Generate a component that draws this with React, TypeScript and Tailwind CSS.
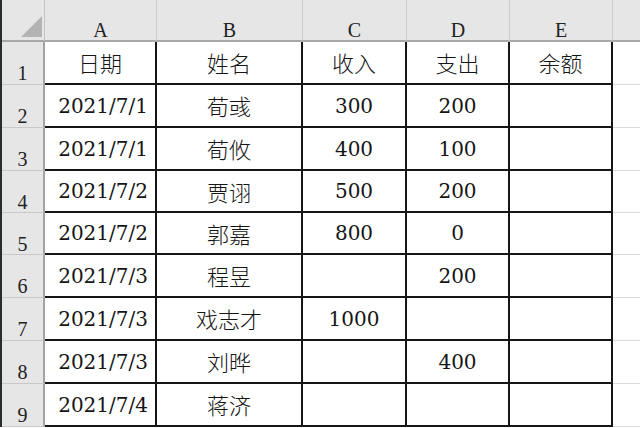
import React from "react";

const rows: { n: string; h: string; a: string; b: string; c: string; d: string }[] = [
  { n: "2", h: "h-[43px]", a: "2021/7/1", b: "荀彧", c: "300", d: "200" },
  { n: "3", h: "h-[43px]", a: "2021/7/1", b: "荀攸", c: "400", d: "100" },
  { n: "4", h: "h-[42px]", a: "2021/7/2", b: "贾诩", c: "500", d: "200" },
  { n: "5", h: "h-[42px]", a: "2021/7/2", b: "郭嘉", c: "800", d: "0" },
  { n: "6", h: "h-[43px]", a: "2021/7/3", b: "程昱", c: "", d: "200" },
  { n: "7", h: "h-[43px]", a: "2021/7/3", b: "戏志才", c: "1000", d: "" },
  { n: "8", h: "h-[43px]", a: "2021/7/3", b: "刘晔", c: "", d: "400" },
  { n: "9", h: "h-[43px]", a: "2021/7/4", b: "蒋济", c: "", d: "" },
];

const serif = "font-['DejaVu_Serif',serif] text-[20px] text-[#151515]";
const cjk = "font-['Noto_Sans_CJK_SC',sans-serif] font-light text-[22px] text-[#151515]";
const hdr = "font-['Liberation_Serif',serif] text-[20px] text-[#222]";
const cell = "border-r-2 border-b-2 border-[#161616] flex items-center justify-center";

function RowHead({ n }: { n: string }) {
  return (
    <div className={`w-[43px] shrink-0 bg-[#e6e6e6] border-r-2 border-r-[#a3a3a3] border-b border-b-[#c9c9c9] flex justify-center items-center pt-[20px] leading-none ${hdr}`}>
      {n}
    </div>
  );
}

export default function App() {
  return (
    <div className="w-[640px] h-[428px] overflow-hidden bg-white flex flex-col">
      {/* column header */}
      <div className="flex h-[42px] shrink-0">
        <div className="w-[2px] bg-[#26302b]" />
        <div className="w-[43px] shrink-0 bg-[#e6e6e6] border-r border-r-[#c4c4c4] border-b-2 border-b-[#a8a8a8] flex items-end justify-end pr-[2px] pb-[3px]">
          <svg width="21" height="21" viewBox="0 0 21 21">
            <polygon points="0,21 21,21 21,0" fill="#b3b3b3" />
          </svg>
        </div>
        {[
          ["A", "w-[112px]"],
          ["B", "w-[146px]"],
          ["C", "w-[104px]"],
          ["D", "w-[103px]"],
          ["E", "w-[103px]"],
        ].map(([l, w]) => (
          <div
            key={l}
            className={`${w} shrink-0 bg-[#e6e6e6] border-r border-r-[#cbcbcb] border-b-2 border-b-[#a8a8a8] flex justify-center items-center pt-[20px] leading-none ${hdr}`}
          >
            {l}
          </div>
        ))}
        <div className="flex-1 bg-[#e6e6e6] border-b-2 border-b-[#a8a8a8]" />
      </div>

      {/* row 1 */}
      <div className="flex h-[43px] shrink-0">
        <div className="w-[2px] bg-[#26302b]" />
        <RowHead n="1" />
        <div className={`w-[112px] shrink-0 ${cell} ${cjk}`}>日期</div>
        <div className={`w-[146px] shrink-0 ${cell} ${cjk}`}>姓名</div>
        <div className={`w-[104px] shrink-0 ${cell} ${cjk}`}>收入</div>
        <div className={`w-[103px] shrink-0 ${cell} ${cjk}`}>支出</div>
        <div className={`w-[103px] shrink-0 ${cell} ${cjk}`}>余额</div>
        <div className="flex-1 border-b border-b-[#dcdcdc]" />
      </div>

      {rows.map((r) => (
        <div key={r.n} className={`flex ${r.h} shrink-0`}>
          <div className="w-[2px] bg-[#26302b]" />
          <RowHead n={r.n} />
          <div className={`w-[112px] shrink-0 border-r-2 border-b-2 border-[#161616] flex items-center justify-end pr-[7px] ${serif}`}>
            {r.a}
          </div>
          <div className={`w-[146px] shrink-0 ${cell} ${cjk}`}>{r.b}</div>
          <div className={`w-[104px] shrink-0 ${cell} ${serif}`}>{r.c}</div>
          <div className={`w-[103px] shrink-0 ${cell} ${serif}`}>{r.d}</div>
          <div className={`w-[103px] shrink-0 ${cell}`} />
          <div className="flex-1 border-b border-b-[#dcdcdc]" />
        </div>
      ))}
    </div>
  );
}
